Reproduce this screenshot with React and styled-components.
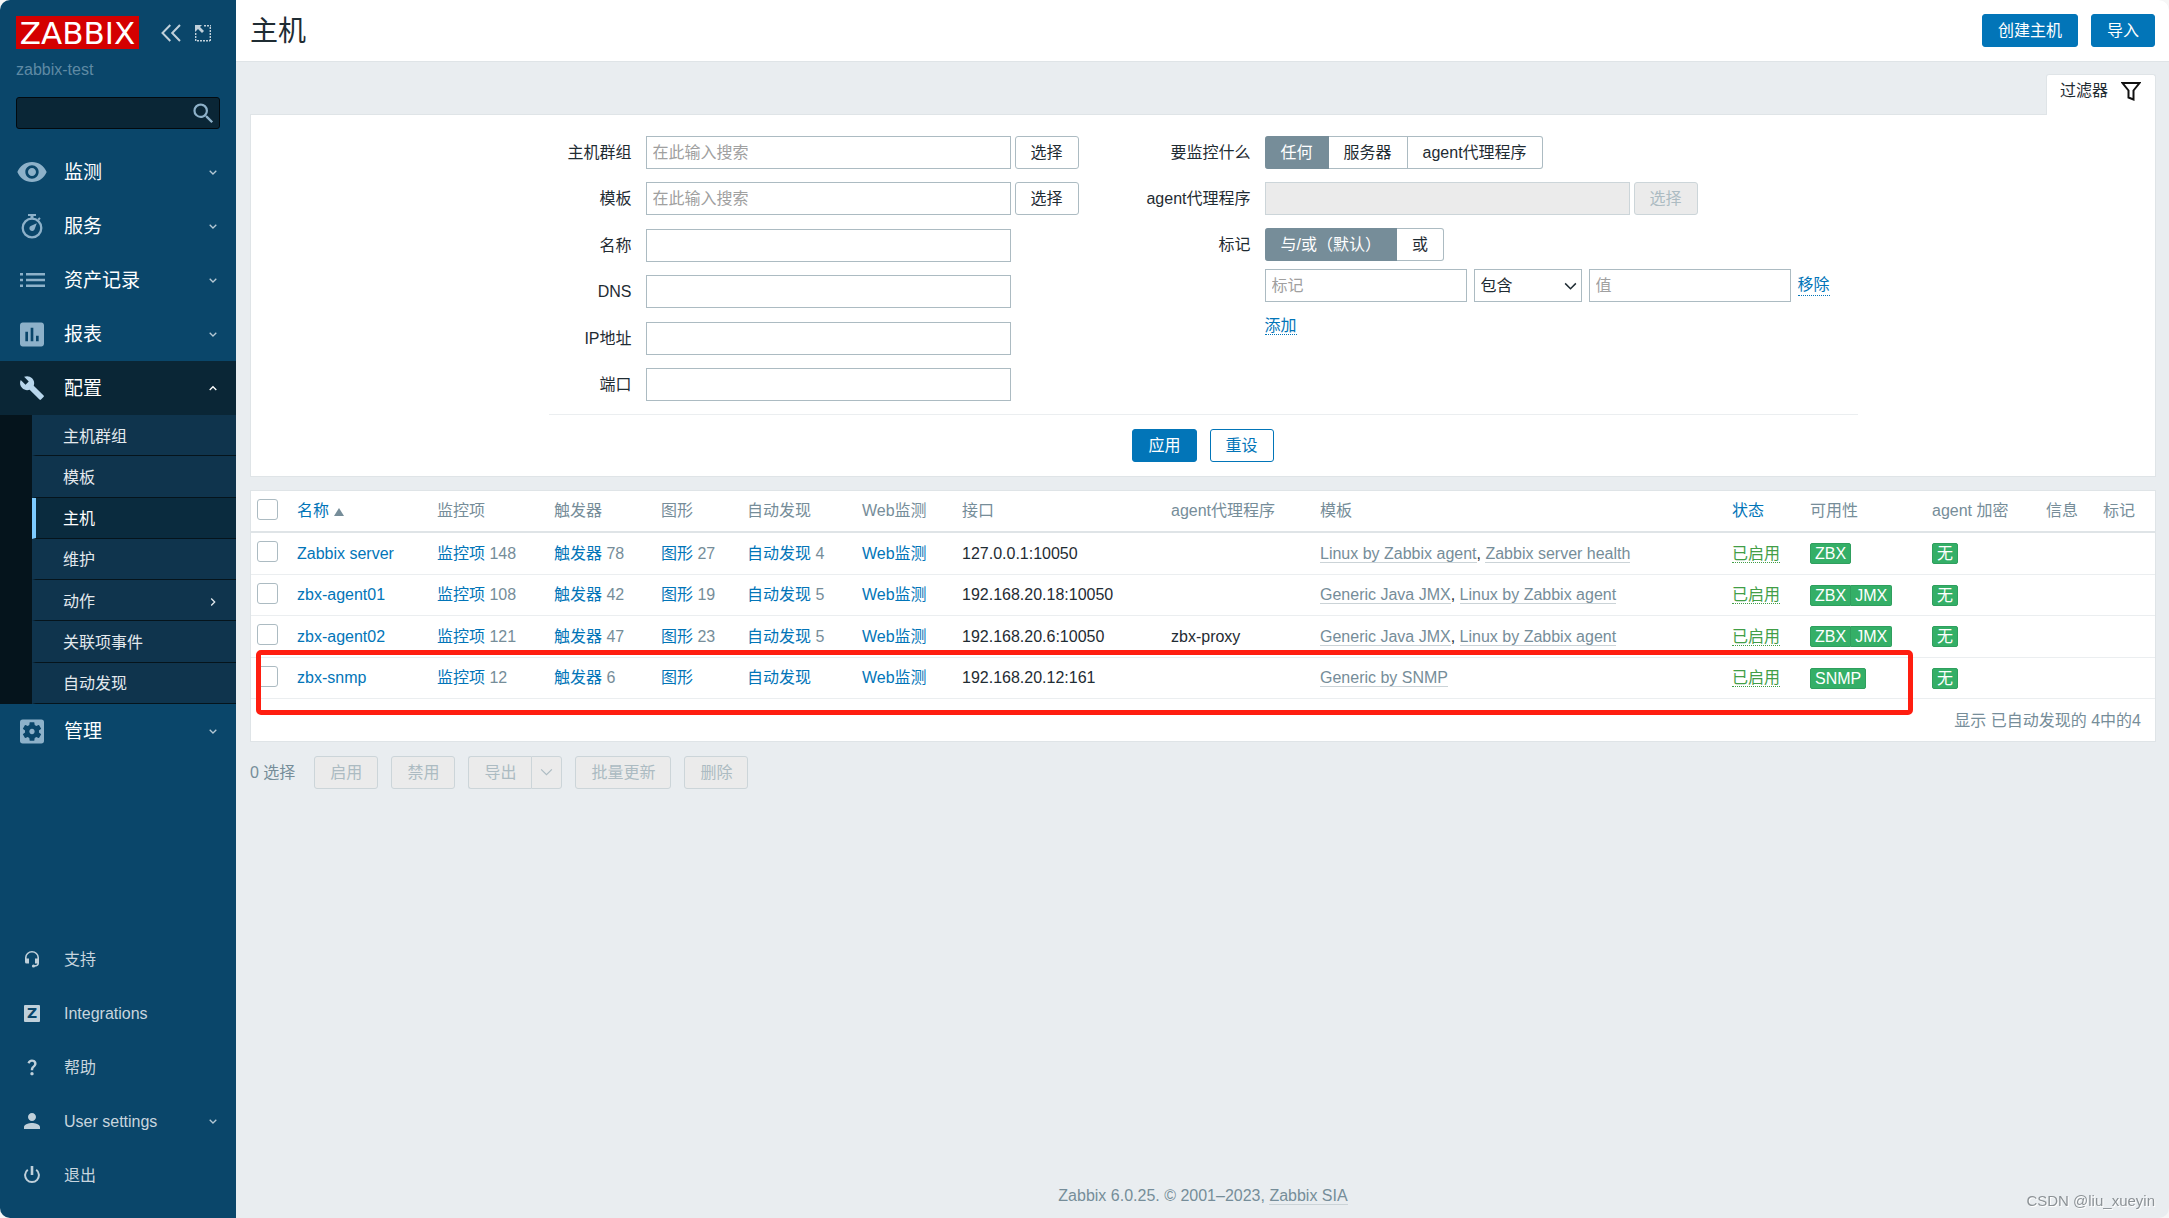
import React from 'react';
import styled, { createGlobalStyle, css } from 'styled-components';
import {
    MdAssessment,
    MdBuild,
    MdPerson,
    MdQuestionMark,
    MdSearch,
    MdSettingsApplications,
    MdVisibility,
} from 'react-icons/md';

const GlobalStyle = createGlobalStyle`
    * {
        box-sizing: border-box;
    }

    body {
        margin: 0;
        background: #f6f6f6;
        color: #1f2c33;
        font: 16px/20px 'Liberation Sans', 'Noto Sans CJK SC', sans-serif;
    }

    button, input, select {
        font: inherit;
        color: inherit;
        margin: 0;
    }

    a {
        color: #0275b8;
        text-decoration: none;
    }
`;

const Page = styled.div`
    display: flex;
    min-height: 100vh;
    background: #e9edf0;
    border-radius: 10px;
    overflow: hidden;
`;

/* Sidebar */

const Sidebar = styled.aside`
    display: flex;
    flex-direction: column;
    flex: none;
    width: 236px;
    background: #0a466a;
`;

const SidebarTop = styled.div`
    display: flex;
    align-items: center;
    padding: 16px 16px 0;
`;

const Logo = styled.a`
    flex: none;
    width: 123px;
    height: 33px;
    margin-right: 22px;
    background: #d40000;
    color: white;
    font-family: 'DejaVu Sans', sans-serif;
    font-size: 31px;
    line-height: 34px;
    text-align: center;
`;

const IconButton = styled.button`
    display: flex;
    flex: none;
    padding: 0;
    border: 0;
    margin-right: 14px;
    background: none;
    color: #c0d0da;
`;

const ServerName = styled.div`
    padding: 11px 16px 0;
    color: #5f8aa4;
`;

const Search = styled.form`
    display: flex;
    align-items: center;
    height: 32px;
    margin: 17px 16px 16px;
    padding-right: 2px;
    background: #0a2636;
    border: 1px solid #020a0f;
    border-radius: 3px;

    input {
        flex: 1;
        min-width: 0;
        border: 0;
        outline: 0;
        background: none;
        color: white;
    }
`;

const Menu = styled.ul`
    list-style: none;
    margin: 0;
    padding: 0;
`;

const BottomMenu = styled(Menu)`
    margin-top: auto;
    padding-bottom: 16px;
`;

const MenuLink = styled.a`
    display: flex;
    align-items: center;
    height: 54px;
    padding: 0 19px 0 16px;
    color: ${props => (props.$small ? '#c8d5de' : 'white')};
    font-size: ${props => (props.$small ? 16 : 19)}px;
    background: ${props => (props.$open ? '#0a2636' : 'none')};
`;

const MenuLabel = styled.span`
    flex: 1;
    padding: 2px 0 0 16px;
`;

const MenuIcon = styled.span`
    display: flex;
    justify-content: center;
    width: 32px;
    color: ${props => props.$color || '#8db1c9'};
`;

const Submenu = styled.ul`
    display: grid;
    grid-auto-rows: 1fr;
    min-height: 289px;
    list-style: none;
    margin: 0;
    padding: 0 0 0 32px;
    background: #05141c;
`;

const SubmenuLink = styled.a`
    display: flex;
    align-items: center;
    justify-content: space-between;
    height: 100%;
    padding: 3px 19px 0 27px;
    border-left: 4px solid ${props => (props.$selected ? '#7dcbff' : '#0f344d')};
    border-bottom: 1px solid #05141c;
    background: ${props => (props.$selected ? '#0a2b3e' : '#0f344d')};
    color: ${props => (props.$selected ? 'white' : '#e3e9ed')};
`;

const IntegrationsMark = styled.span`
    width: 16px;
    height: 17px;
    border-radius: 1px;
    background: #c0d0da;
    color: #0a466a;
    font-family: 'DejaVu Sans', sans-serif;
    font-size: 14px;
    font-weight: bold;
    line-height: 17px;
    text-align: center;
`;

/* Main area */

const Main = styled.main`
    display: flex;
    flex-direction: column;
    flex: 1;
    min-width: 0;
`;

const Header = styled.header`
    display: flex;
    align-items: center;
    height: 62px;
    padding: 0 14px;
    background: white;
    border-bottom: 1px solid #dfe4e7;

    h1 {
        flex: 1;
        margin: 0;
        padding-top: 2px;
        font-size: 28px;
        font-weight: normal;
        line-height: 32px;
    }
`;

const Button = styled.button`
    height: 33px;
    padding: 0 15px;
    border: 1px solid #acbbc2;
    border-radius: 3px;
    background: white;
    line-height: 20px;
    white-space: nowrap;

    ${props => props.$primary && css`
        background: #0275b8;
        border-color: #0275b8;
        color: white;
    `}

    ${props => props.$outline && css`
        border-color: #0275b8;
        color: #0275b8;
    `}

    &:disabled {
        background: #ebebeb;
        border-color: #ccd5d9;
        color: #acbbc2;
    }
`;

const ButtonRow = styled.div`
    display: flex;
    align-items: center;
    justify-content: ${props => (props.$center ? 'center' : 'flex-start')};
    gap: 13px;
`;

const Content = styled.div`
    display: flex;
    flex-direction: column;
    flex: 1;
    padding: 12px 13px 12px 14px;
`;

const FilterTab = styled.a`
    display: flex;
    align-items: center;
    align-self: flex-end;
    gap: 13px;
    height: 41px;
    margin-bottom: -1px;
    padding: 0 14px 9px 13px;
    background: white;
    border: 1px solid #dfe4e7;
    border-bottom: 0;
    border-radius: 3px 3px 0 0;
    color: #1f2c33;
    z-index: 1;
`;

const Panel = styled.section`
    background: white;
    border: 1px solid #dfe4e7;
`;

const FilterForm = styled.form`
    max-width: 1309px;
    margin: 0 auto;
    padding: 21px 0 14px;
`;

const FilterColumns = styled.div`
    display: flex;
    min-height: 279px;
    margin-bottom: 14px;
    padding-bottom: 13px;
    border-bottom: 1px solid #ebeef0;
`;

const FieldColumn = styled.div`
    flex: ${props => (props.$wide ? '1' : '0 0 531px')};
    display: grid;
    grid-template-columns: ${props => (props.$wide ? 171 : 83)}px 1fr;
    column-gap: 14px;
    row-gap: 13px;
    align-content: ${props => (props.$wide ? 'start' : 'space-between')};
`;

const FieldLabel = styled.label`
    line-height: 33px;
    text-align: right;
    white-space: nowrap;
`;

const Field = styled.div`
    display: flex;
    align-items: center;
    gap: 4px;
`;

const TextInput = styled.input`
    flex: none;
    width: ${props => (props.$short ? 202 : 365)}px;
    height: 33px;
    padding: 0 6px;
    border: 1px solid #acbbc2;
    border-radius: 0;
    background: white;

    &::placeholder {
        color: #a0a0a0;
        opacity: 1;
    }

    &:disabled {
        background: #ebebeb;
        border-color: #ccd5d9;
    }
`;

const Segments = styled.div`
    display: flex;
    height: 33px;

    label {
        padding: 0 15px;
        border: 1px solid #acbbc2;
        border-left-width: 0;
        line-height: 31px;
        cursor: pointer;
    }

    label:first-child {
        padding-left: 16px;
        border-radius: 3px 0 0 3px;
    }

    label:last-child {
        border-radius: 0 3px 3px 0;
    }

    label:has(input:checked) {
        background: #768d99;
        border-color: #768d99;
        color: white;
    }

    input {
        position: absolute;
        opacity: 0;
    }
`;

const SelectBox = styled.div`
    display: grid;
    align-items: center;
    width: 108px;
    height: 33px;

    select, svg {
        grid-area: 1 / 1;
    }

    select {
        width: 100%;
        height: 100%;
        padding: 0 6px;
        border: 1px solid #acbbc2;
        border-radius: 0;
        background: white;
        appearance: none;
    }

    svg {
        justify-self: end;
        margin-right: 5px;
        pointer-events: none;
    }
`;

const DottedLink = styled.a`
    border-bottom: 1px dotted;
    color: ${props => (props.$green ? '#429e47' : '#0275b8')};
`;

const TagRow = styled.div`
    display: flex;
    align-items: center;
    gap: 7px;
    margin: 8px 0 14px;
`;

/* Host list */

const ListPanel = styled(Panel)`
    position: relative;
    margin-top: 13px;
`;

const Table = styled.table`
    width: 100%;
    table-layout: fixed;
    border-spacing: 0;

    th, td {
        padding: 0 7px;
        text-align: left;
        font-weight: normal;
        white-space: nowrap;
        border-bottom: 1px solid #ebeef0;
    }

    th {
        color: #768d99;
        border-bottom: 2px solid #dfe4e7;
    }

    thead tr, tbody tr {
        height: 42px;
    }

    tbody tr:nth-child(even) {
        height: 41px;
    }

    tfoot td {
        height: 42px;
        padding: 1px 14px 0;
        border-bottom: 0;
        color: #768d99;
        text-align: right;
    }

    th:first-child, tbody td:first-child {
        padding: 8px 6px 0;
        vertical-align: top;
    }
`;

const Checkbox = styled.input.attrs({ type: 'checkbox' })`
    display: block;
    width: 21px;
    height: 21px;
    border: 1px solid #acbbc2;
    border-radius: 3px;
    background: white;
    appearance: none;
`;

const SortArrow = styled.span`
    display: inline-block;
    margin-left: 5px;
    border: 5px solid transparent;
    border-top: 0;
    border-bottom: 8px solid #768d99;
`;

const Count = styled.span`
    color: #768d99;
`;

const TemplateLink = styled.a`
    color: #768d99;
    border-bottom: 1px solid #cbd3d7;
`;

const Badges = styled.span`
    display: flex;
`;

const Badge = styled.span`
    height: 21px;
    padding: 0 4px;
    border: 1px solid #2f9f5e;
    background: #34af67;
    color: white;
    line-height: 19px;

    &:first-child {
        border-radius: 2px 0 0 2px;
    }

    &:last-child {
        border-radius: 0 2px 2px 0;
    }

    &:only-child {
        border-radius: 2px;
    }

    & + & {
        border-left-width: 0;
    }
`;

/* Red frame drawn over the last host */
const Highlight = styled.div`
    position: absolute;
    left: 5px;
    right: 242px;
    bottom: 26px;
    height: 65px;
    border: 5px solid #ff1e10;
    border-radius: 5px;
    pointer-events: none;
`;

const BulkBar = styled.div`
    display: flex;
    align-items: center;
    gap: 19px;
    margin-top: 14px;
    color: #768d99;
`;

const SplitButton = styled.div`
    display: flex;

    button:first-child {
        border-right: 0;
        border-radius: 3px 0 0 3px;
    }

    button:last-child {
        padding: 0 8px;
        border-radius: 0 3px 3px 0;
    }
`;

const Footer = styled.footer`
    margin-top: auto;
    text-align: center;
    color: #768d99;
`;

const Watermark = styled.div`
    position: fixed;
    right: 14px;
    bottom: 7px;
    color: #8c9296;
    font-size: 15px;
    text-shadow: 1px 1px 0 white;
`;

/* Icons */

const Chevron = ({ direction = 'down', size = 8, color = 'currentColor', width = 1.3 }) => {
    const paths = {
        down: 'M0.7 2.7 L4 6 L7.3 2.7',
        up: 'M0.7 6 L4 2.7 L7.3 6',
        right: 'M2.2 0.5 L5.7 4 L2.2 7.5',
    };
    return (
        <svg width={size} height={size} viewBox="0 0 8 8" fill="none" stroke={color} strokeWidth={width}>
            <path d={paths[direction]} />
        </svg>
    );
};

const CollapseIcon = () => (
    <svg width="20" height="18" viewBox="0 0 20 18" fill="none" stroke="currentColor" strokeWidth="2">
        <path d="M9.3 1 L1.5 9 L9.3 17 M19 1 L11.2 9 L19 17" />
    </svg>
);

const KioskIcon = () => (
    <svg width="17" height="18" viewBox="0 0 17 18" fill="none">
        <path d="M0 1h7L5 3l4 4-2 2-4-4-3 3z" fill="currentColor" />
        <path
            d="M9 1.7h7M15.3 3v14M0.7 9v8M2 16.7h13"
            stroke="currentColor"
            strokeWidth="1.4"
            strokeDasharray="2 1"
        />
    </svg>
);

const StopwatchIcon = () => (
    <svg width="22" height="25" viewBox="0 0 22 25" fill="none">
        <path d="M7 0h8v2h-2.5v2h-3v-2h-2.5z" fill="currentColor" />
        <path d="M17.2 5.8l1.8-1.8" stroke="currentColor" strokeWidth="2" />
        <circle cx="11" cy="14" r="9.3" stroke="currentColor" strokeWidth="2.3" />
        <path d="M15.8 9.2l-2.3 6.3a2.7 2.7 0 1 1-3.8-3.5z" fill="currentColor" />
    </svg>
);

const ListIcon = () => (
    <svg width="25" height="14" viewBox="0 0 25 14" fill="currentColor">
        <path d="M0 0h3v2.5H0zM6 0h19v2.5H6zM0 5.8h3v2.5H0zM6 5.8h19v2.5H6zM0 11.5h3V14H0zM6 11.5h19V14H6z" />
    </svg>
);

const HeadsetIcon = () => (
    <svg width="14" height="17" viewBox="0 0 14 17" fill="none">
        <path
            d="M0.800 8V6.500a6.200 5.700 0 0 1 12.400 0V12q0 3-4 3"
            stroke="currentColor"
            strokeWidth="1.600"
        />
        <path d="M0 7.500h4v5H1.500Q0 12.500 0 11zM10 7.500h4v5h-4z" fill="currentColor" />
        <circle cx="8.500" cy="15" r="1.600" fill="currentColor" />
    </svg>
);

const PowerIcon = () => (
    <svg width="16" height="18" viewBox="0 0 16 18" fill="none" stroke="currentColor">
        <path d="M8 0v9" strokeWidth="2.600" />
        <path d="M3.800 3.700a6.900 6.900 0 1 0 8.400 0" strokeWidth="2" />
    </svg>
);

const FilterIcon = () => (
    <svg width="20" height="20" viewBox="0 0 20 20" fill="none" stroke="#111" strokeWidth="2">
        <path d="M1.5 2h17L12.5 9.5v9L7.5 16.5v-7z" />
    </svg>
);

const topMenu = [
    { label: '监测', icon: <MdVisibility size={32} /> },
    { label: '服务', icon: <StopwatchIcon /> },
    { label: '资产记录', icon: <ListIcon /> },
    { label: '报表', icon: <MdAssessment size={33} /> },
    {
        label: '配置',
        icon: <MdBuild size={26} />,
        children: ['主机群组', '模板', '主机', '维护', '动作', '关联项事件', '自动发现'],
    },
    { label: '管理', icon: <MdSettingsApplications size={33} /> },
];

const bottomMenu = [
    { label: '支持', icon: <HeadsetIcon /> },
    { label: 'Integrations', icon: <IntegrationsMark>Z</IntegrationsMark> },
    { label: '帮助', icon: <MdQuestionMark size={20} /> },
    { label: 'User settings', icon: <MdPerson size={24} />, expandable: true },
    { label: '退出', icon: <PowerIcon /> },
];

const columns = [
    { label: '监控项', width: 117 },
    { label: '触发器', width: 107 },
    { label: '图形', width: 86 },
    { label: '自动发现', width: 115 },
    { label: 'Web监测', width: 100 },
    { label: '接口', width: 209 },
    { label: 'agent代理程序', width: 149 },
    { label: '模板' },
    { label: '状态', width: 78, sortable: true },
    { label: '可用性', width: 122 },
    { label: 'agent 加密', width: 114 },
    { label: '信息', width: 57 },
    { label: '标记', width: 59 },
];

const hosts = [
    {
        name: 'Zabbix server', items: 148, triggers: 78, graphs: 27, discovery: 4,
        address: '127.0.0.1:10050', templates: ['Linux by Zabbix agent', 'Zabbix server health'], availability: ['ZBX'],
    },
    {
        name: 'zbx-agent01', items: 108, triggers: 42, graphs: 19, discovery: 5,
        address: '192.168.20.18:10050', templates: ['Generic Java JMX', 'Linux by Zabbix agent'], availability: ['ZBX', 'JMX'],
    },
    {
        name: 'zbx-agent02', items: 121, triggers: 47, graphs: 23, discovery: 5, proxy: 'zbx-proxy',
        address: '192.168.20.6:10050', templates: ['Generic Java JMX', 'Linux by Zabbix agent'], availability: ['ZBX', 'JMX'],
    },
    {
        name: 'zbx-snmp', items: 12, triggers: 6,
        address: '192.168.20.12:161', templates: ['Generic by SNMP'], availability: ['SNMP'],
    },
];

const CountLink = ({ label, count }) => (
    <td>
        <a href="#">{label}</a>
        {count && <Count> {count}</Count>}
    </td>
);

const SidebarMenu = () => (
    <Sidebar>
        <SidebarTop>
            <Logo href="#">ZABBIX</Logo>
            <IconButton aria-label="收起"><CollapseIcon /></IconButton>
            <IconButton aria-label="隐藏"><KioskIcon /></IconButton>
        </SidebarTop>
        <ServerName>zabbix-test</ServerName>
        <Search>
            <input type="text" aria-label="搜索" />
            <MdSearch size={27} color="#8db1c9" />
        </Search>
        <Menu>
            {topMenu.map(item => (
                <li key={item.label}>
                    <MenuLink href="#" $open={!!item.children}>
                        <MenuIcon $color={item.children && '#b8d6ec'}>{item.icon}</MenuIcon>
                        <MenuLabel>{item.label}</MenuLabel>
                        <Chevron direction={item.children ? 'up' : 'down'} color={item.children ? 'white' : '#b5c8d4'} />
                    </MenuLink>
                    {item.children && (
                        <Submenu>
                            {item.children.map(child => (
                                <li key={child}>
                                    <SubmenuLink href="#" $selected={child === '主机'}>
                                        {child}
                                        {child === '动作' && <Chevron direction="right" />}
                                    </SubmenuLink>
                                </li>
                            ))}
                        </Submenu>
                    )}
                </li>
            ))}
        </Menu>
        <BottomMenu>
            {bottomMenu.map(item => (
                <li key={item.label}>
                    <MenuLink href="#" $small>
                        <MenuIcon $color="#c0d0da">{item.icon}</MenuIcon>
                        <MenuLabel>{item.label}</MenuLabel>
                        {item.expandable && <Chevron color="#b5c8d4" />}
                    </MenuLink>
                </li>
            ))}
        </BottomMenu>
    </Sidebar>
);

const Filter = () => (
    <FilterForm>
        <FilterColumns>
            <FieldColumn>
                <FieldLabel htmlFor="groups">主机群组</FieldLabel>
                <Field>
                    <TextInput id="groups" placeholder="在此输入搜索" />
                    <Button type="button">选择</Button>
                </Field>
                <FieldLabel htmlFor="templates">模板</FieldLabel>
                <Field>
                    <TextInput id="templates" placeholder="在此输入搜索" />
                    <Button type="button">选择</Button>
                </Field>
                <FieldLabel htmlFor="name">名称</FieldLabel>
                <Field><TextInput id="name" /></Field>
                <FieldLabel htmlFor="dns">DNS</FieldLabel>
                <Field><TextInput id="dns" /></Field>
                <FieldLabel htmlFor="ip">IP地址</FieldLabel>
                <Field><TextInput id="ip" /></Field>
                <FieldLabel htmlFor="port">端口</FieldLabel>
                <Field><TextInput id="port" /></Field>
            </FieldColumn>
            <FieldColumn $wide>
                <FieldLabel as="span">要监控什么</FieldLabel>
                <Segments>
                    <label><input type="radio" name="monitored" defaultChecked />任何</label>
                    <label><input type="radio" name="monitored" />服务器</label>
                    <label><input type="radio" name="monitored" />agent代理程序</label>
                </Segments>
                <FieldLabel htmlFor="proxy">agent代理程序</FieldLabel>
                <Field>
                    <TextInput id="proxy" disabled />
                    <Button type="button" disabled>选择</Button>
                </Field>
                <FieldLabel as="span">标记</FieldLabel>
                <div>
                    <Segments>
                        <label><input type="radio" name="evaltype" defaultChecked />与/或（默认）</label>
                        <label><input type="radio" name="evaltype" />或</label>
                    </Segments>
                    <TagRow>
                        <TextInput $short placeholder="标记" aria-label="标记" />
                        <SelectBox>
                            <select aria-label="运算符" defaultValue="包含">
                                <option>包含</option>
                            </select>
                            <Chevron size={13} color="#1f2c33" width={0.9} />
                        </SelectBox>
                        <TextInput $short placeholder="值" aria-label="值" />
                        <DottedLink href="#">移除</DottedLink>
                    </TagRow>
                    <DottedLink href="#">添加</DottedLink>
                </div>
            </FieldColumn>
        </FilterColumns>
        <ButtonRow $center>
            <Button type="button" $primary>应用</Button>
            <Button type="button" $outline>重设</Button>
        </ButtonRow>
    </FilterForm>
);

const HostTable = () => (
    <Table>
        <colgroup>
            <col width="39" />
            <col width="140" />
            {columns.map(column => <col key={column.label} width={column.width} />)}
        </colgroup>
        <thead>
            <tr>
                <th><Checkbox aria-label="全选" /></th>
                <th><a href="#">名称<SortArrow /></a></th>
                {columns.map(column => (
                    <th key={column.label}>
                        {column.sortable ? <a href="#">{column.label}</a> : column.label}
                    </th>
                ))}
            </tr>
        </thead>
        <tbody>
            {hosts.map(host => (
                <tr key={host.name}>
                    <td><Checkbox aria-label={host.name} /></td>
                    <td><a href="#">{host.name}</a></td>
                    <CountLink label="监控项" count={host.items} />
                    <CountLink label="触发器" count={host.triggers} />
                    <CountLink label="图形" count={host.graphs} />
                    <CountLink label="自动发现" count={host.discovery} />
                    <CountLink label="Web监测" />
                    <td>{host.address}</td>
                    <td>{host.proxy}</td>
                    <td>
                        {host.templates.map((template, i) => (
                            <React.Fragment key={template}>
                                {i > 0 && ', '}
                                <TemplateLink href="#">{template}</TemplateLink>
                            </React.Fragment>
                        ))}
                    </td>
                    <td><DottedLink href="#" $green>已启用</DottedLink></td>
                    <td>
                        <Badges>
                            {host.availability.map(type => <Badge key={type}>{type}</Badge>)}
                        </Badges>
                    </td>
                    <td><Badges><Badge>无</Badge></Badges></td>
                    <td />
                    <td />
                </tr>
            ))}
        </tbody>
        <tfoot>
            <tr>
                <td colSpan={columns.length + 2}>显示 已自动发现的 4中的4</td>
            </tr>
        </tfoot>
    </Table>
);

export default function App() {
    return (
        <Page>
            <GlobalStyle />
            <SidebarMenu />
            <Main>
                <Header>
                    <h1>主机</h1>
                    <ButtonRow>
                        <Button $primary>创建主机</Button>
                        <Button $primary>导入</Button>
                    </ButtonRow>
                </Header>
                <Content>
                    <FilterTab href="#">过滤器<FilterIcon /></FilterTab>
                    <Panel><Filter /></Panel>
                    <ListPanel>
                        <HostTable />
                        <Highlight />
                    </ListPanel>
                    <BulkBar>
                        <span>0 选择</span>
                        <ButtonRow>
                            <Button disabled>启用</Button>
                            <Button disabled>禁用</Button>
                            <SplitButton>
                                <Button disabled>导出</Button>
                                <Button disabled aria-label="导出格式">
                                    <Chevron size={13} width={0.7} />
                                </Button>
                            </SplitButton>
                            <Button disabled>批量更新</Button>
                            <Button disabled>删除</Button>
                        </ButtonRow>
                    </BulkBar>
                    <Footer>
                        Zabbix 6.0.25. © 2001–2023, <TemplateLink href="#">Zabbix SIA</TemplateLink>
                    </Footer>
                </Content>
            </Main>
            <Watermark>CSDN @liu_xueyin</Watermark>
        </Page>
    );
}
